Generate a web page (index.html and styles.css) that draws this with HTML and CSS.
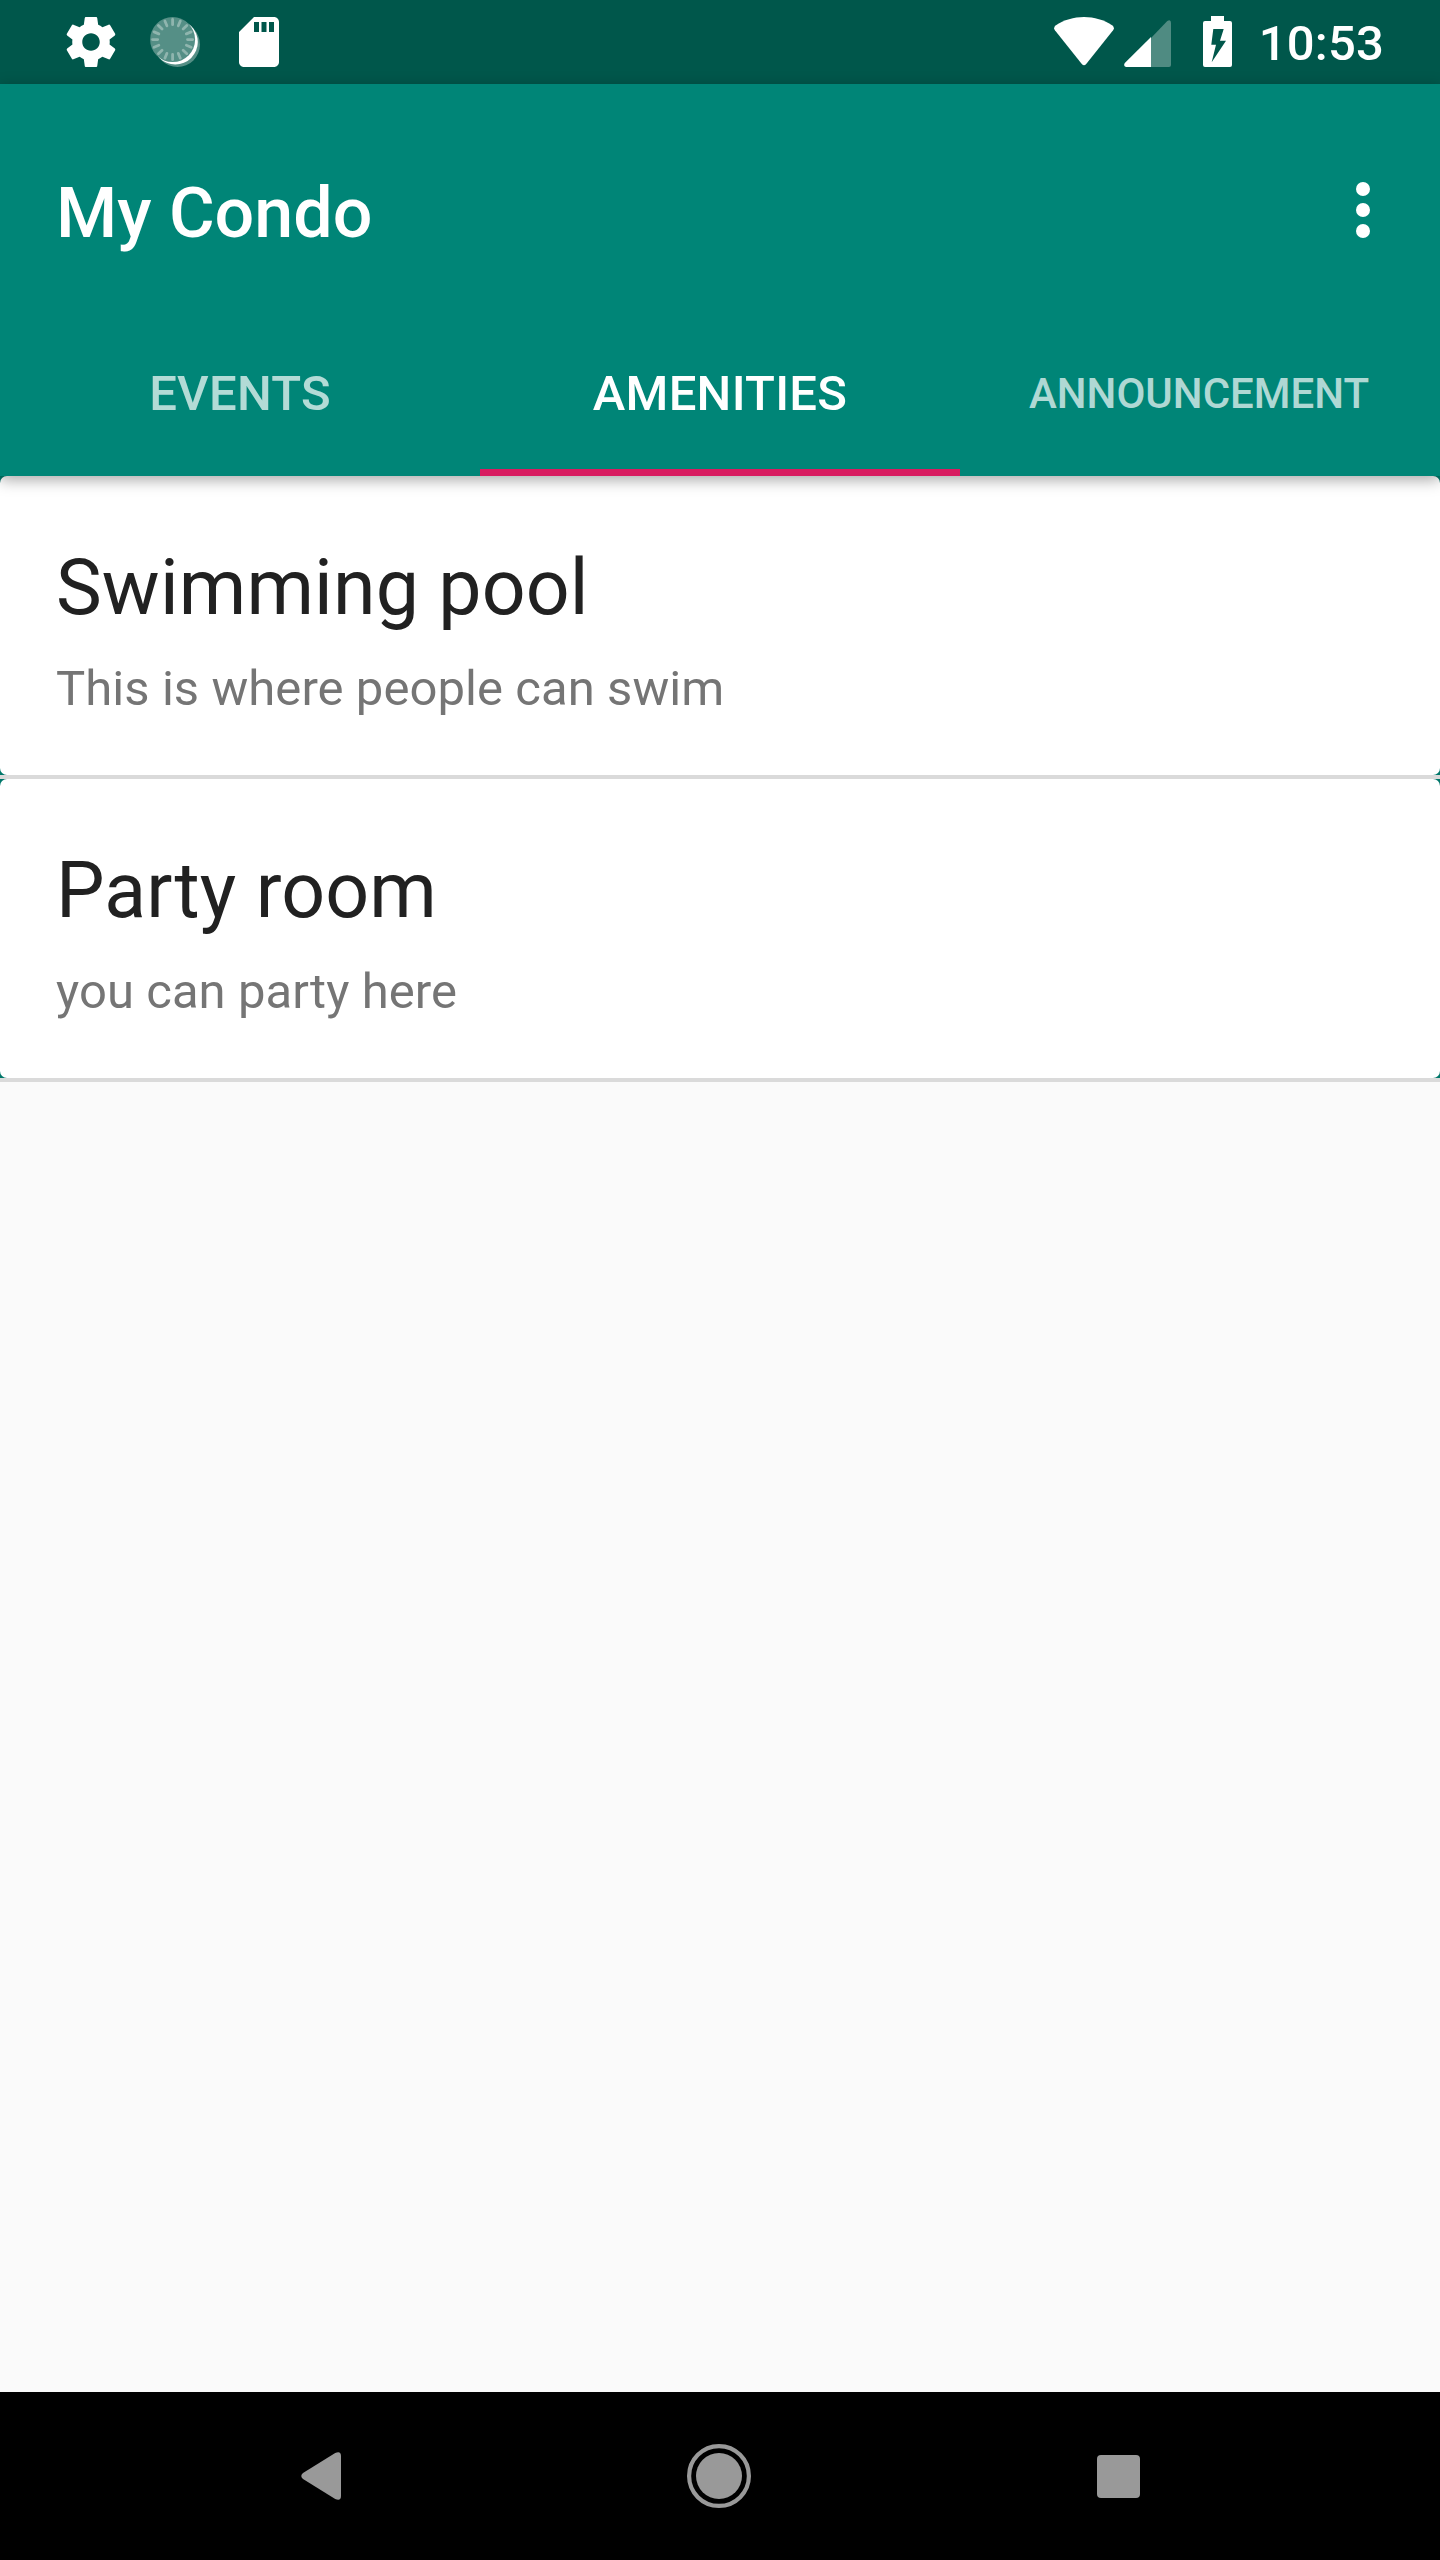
FILE: index.html
```html
<!DOCTYPE html>
<html lang="en">
<head>
<meta charset="utf-8">
<title>My Condo</title>
<link rel="stylesheet" href="styles.css">
</head>
<body>
<div class="screen">
  <div class="status-bar">
    <div class="notifications">
      <svg class="icon" viewBox="0 0 24 24"><path fill="#fff" d="M19.43 12.98c.04-.32.07-.64.07-.98s-.03-.66-.07-.98l2.11-1.65c.19-.15.24-.42.12-.64l-2-3.46c-.12-.22-.39-.3-.61-.22l-2.49 1c-.52-.4-1.08-.73-1.69-.98l-.38-2.65C14.46 2.18 14.25 2 14 2h-4c-.25 0-.46.18-.49.42l-.38 2.65c-.61.25-1.17.59-1.69.98l-2.49-1c-.23-.09-.49 0-.61.22l-2 3.46c-.13.22-.07.49.12.64l2.11 1.65c-.04.32-.07.65-.07.98s.03.66.07.98l-2.11 1.65c-.19.15-.24.42-.12.64l2 3.46c.12.22.39.3.61.22l2.49-1c.52.4 1.08.73 1.69.98l.38 2.65c.03.24.24.42.49.42h4c.25 0 .46-.18.49-.42l.38-2.65c.61-.25 1.17-.59 1.69-.98l2.49 1c.23.09.49 0 .61-.22l2-3.46c.12-.22.07-.49-.12-.64l-2.11-1.65zM12 15.5c-1.93 0-3.5-1.57-3.5-3.5s1.57-3.5 3.5-3.5 3.5 1.57 3.5 3.5-1.57 3.5-3.5 3.5z"/></svg>
      <svg class="icon" viewBox="0 0 60 60">
        <circle cx="32.5" cy="32.5" r="22.5" fill="#558f86"/>
        <circle cx="30.3" cy="30" r="22.5" fill="#fff"/>
        <circle cx="27.6" cy="27.6" r="22.5" fill="#558f86"/>
        <g stroke="#8fb5ae" stroke-width="2.8" stroke-linecap="round">
          <path id="tick" d="M27.6 7.5v5.2M27.6 42.5v5.2M7.5 27.6h5.2M42.5 27.6h5.2"/>
          <use href="#tick" transform="rotate(22.5 27.6 27.6)"/>
          <use href="#tick" transform="rotate(45 27.6 27.6)"/>
          <use href="#tick" transform="rotate(67.5 27.6 27.6)"/>
        </g>
      </svg>
      <svg class="icon" viewBox="0 0 24 24"><path fill="#fff" d="M18 2h-8L4 8v12c0 1.1.9 2 2 2h12c1.1 0 2-.9 2-2V4c0-1.1-.9-2-2-2zm-6 6h-2V4h2v4zm3 0h-2V4h2v4zm3 0h-2V4h2v4z"/></svg>
    </div>
    <div class="system">
      <svg class="wifi" viewBox="0 0 60 60"><path fill="#fff" d="M28 47.2 .9 13.2Q-.9 10.6 1.6 8.6C18-2.8 42-2.8 58.4 8.6Q60.9 10.6 59.1 13.2L32 47.2Q30 49.4 28 47.2Z"/></svg>
      <svg class="signal" viewBox="0 0 47 47"><path fill="#4f8b82" d="M27 47V18L43.3 1Q47-1 47 3V45Q47 47 45 47Z"/><path fill="#fff" d="M27 47H2Q-1 46 .8 43L27 17Z"/></svg>
      <svg class="battery" viewBox="0 0 29 51"><path fill="#fff" fill-rule="evenodd" d="M8 0H21V5H27Q29 5 29 7V49Q29 51 27 51H2Q0 51 0 49V7Q0 5 2 5H8ZM10.3 13 8.3 28.7H13L8.7 46.3 23 24.7H17L20.7 13Z"/></svg>
      <span class="clock">10:53</span>
    </div>
  </div>

  <header class="app-bar">
    <div class="toolbar">
      <h1 class="title">My Condo</h1>
      <svg class="overflow" viewBox="0 0 14 56"><g fill="#fff"><circle cx="7" cy="7" r="7"/><circle cx="7" cy="28" r="7"/><circle cx="7" cy="49" r="7"/></g></svg>
    </div>
    <nav class="tabs">
      <a class="tab">EVENTS</a>
      <a class="tab tab-active">AMENITIES</a>
      <a class="tab tab-small">ANNOUNCEMENT</a>
    </nav>
  </header>

  <main class="list">
    <div class="row"><article class="card"><h2 class="card-title">Swimming pool</h2><p class="card-text">This is where people can swim</p></article></div>
    <div class="row"><article class="card"><h2 class="card-title">Party room</h2><p class="card-text">you can party here</p></article></div>
  </main>

  <footer class="nav-bar">
    <svg class="nav-back" viewBox="0 0 40 48"><path fill="#999" d="M2 21 34.2.9Q40-1.500 40 4V44Q40 49.500 34.200 47.100L2 27Q-1.500 24 2 21Z"/></svg>
    <svg class="nav-home" viewBox="0 0 64 64"><circle cx="32" cy="32" r="29.900" fill="none" stroke="#999" stroke-width="4.200"/><circle cx="32" cy="32" r="23" fill="#999"/></svg>
    <div class="nav-recent"></div>
  </footer>
</div>
</body>
</html>
```
FILE: styles.css
```css
* { box-sizing: border-box; }

body {
  margin: 0;
  font-family: Roboto, "Liberation Sans", sans-serif;
  background: #fafafa;
}

h1, h2, p { margin: 0; font-weight: 400; }
svg { display: block; flex: none; }

.screen {
  width: 1440px;
  height: 2560px;
  display: flex;
  flex-direction: column;
  overflow: hidden;
}

.status-bar {
  height: 84px;
  flex: none;
  display: flex;
  justify-content: space-between;
  padding: 0 56px 0 61px;
  background: #00574b;
  color: #fff;
}

.notifications { display: flex; align-items: center; gap: 24px; }
.icon { width: 60px; height: 60px; }

.system { display: flex; align-items: flex-start; }
.wifi { width: 60px; height: 60px; margin: 17px 10px 0 0; }
.signal { width: 47px; height: 47px; margin: 20px 32px 0 0; }
.battery { width: 29px; height: 51px; margin: 16px 27px 0 0; }
.clock { font-size: 49px; font-weight: 500; line-height: 57px; letter-spacing: .2px; margin-top: 15px; }

.app-bar {
  height: 392px;
  flex: none;
  position: relative;
  z-index: 1;
  background: #008577;
  color: #fff;
  box-shadow: 0 4px 14px rgba(0, 0, 0, .34);
}

.toolbar {
  height: 224px;
  display: flex;
  justify-content: space-between;
  padding: 88px 70px 0 56px;
}
.title { font-size: 70px; font-weight: 500; line-height: 82px; }
.overflow { width: 14px; height: 56px; margin-top: 10px; }

.tabs { display: grid; grid-template-columns: repeat(3, 1fr); height: 168px; }
.tab {
  display: flex;
  align-items: center;
  justify-content: center;
  padding-top: 2px;
  font-size: 49px;
  font-weight: 500;
  letter-spacing: .25px;
  color: rgba(255, 255, 255, .7);
}
.tab-active { color: #fff; box-shadow: inset 0 -7px #d81b60; }
.tab-small { font-size: 42px; letter-spacing: 0; padding-right: 2px; }

.list { flex: 1; background: #fafafa; }
.row { background: #00776a; border-bottom: 4px solid #dadada; }
.card {
  height: 299px;
  padding: 67px 56px 0;
  background: #fff;
  border-radius: 7px;
}
.card-title { font-size: 77px; line-height: 90px; letter-spacing: .15px; color: #212121; }
.card-text { font-size: 49px; line-height: 57px; letter-spacing: .06px; margin-top: 27px; color: #757575; }

.nav-bar {
  height: 168px;
  flex: none;
  display: flex;
  align-items: center;
  justify-content: space-between;
  padding: 0 300px 0 301px;
  background: #000;
}
.nav-back { width: 40px; height: 48px; }
.nav-home { width: 64px; height: 64px; }
.nav-recent { width: 43px; height: 43px; border-radius: 4px; background: #999; }
```
